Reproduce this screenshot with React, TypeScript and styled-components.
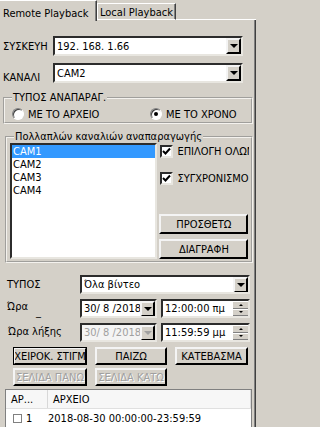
import styled, { createGlobalStyle } from "styled-components";

const GlobalStyle = createGlobalStyle`
  html, body {
    margin: 0;
    padding: 0;
    background: #d4d0c8;
  }
  body {
    width: 259px;
    height: 427px;
    overflow: hidden;
    font-family: "DejaVu Sans Condensed", "Liberation Sans", Tahoma, Arial, sans-serif;
    font-size: 11px;
    color: #000;
  }
`;

const cams = ["CAM1", "CAM2", "CAM3", "CAM4"];

const ComboBox = ({ value, width, disabled }: { value: string; width: number; disabled?: boolean }) => (
  <Combo $width={width} $disabled={disabled}>
    <ComboText>{value}</ComboText>
    <ArrowButton>
      <Triangle $disabled={disabled} />
    </ArrowButton>
  </Combo>
);

const TimeBox = ({ value }: { value: string }) => (
  <TimeField>
    <ComboText>{value}</ComboText>
    <Spinner>
      <SpinHalf>
        <SpinUp />
      </SpinHalf>
      <SpinHalf>
        <SpinDown />
      </SpinHalf>
    </Spinner>
  </TimeField>
);

const CheckBox = ({ checked }: { checked?: boolean }) => (
  <CheckSquare>
    {checked && (
      <svg width="9" height="9" viewBox="0 0 9 9">
        <path d="M1 4 L3.5 6.5 L8 1.5" stroke="#000" strokeWidth="2" fill="none" />
      </svg>
    )}
  </CheckSquare>
);

export default function App() {
  return (
    <>
      <GlobalStyle />
      <Window>
        <TabBar>
          <Tab $active>Remote Playback</Tab>
          <Tab>Local Playback</Tab>
          <TabFiller />
        </TabBar>
        <Panel>
          <FieldRow>
            <RowLabel>ΣΥΣΚΕΥΗ</RowLabel>
            <ComboBox value="192. 168. 1.66" width={190} />
          </FieldRow>
          <FieldRow>
            <RowLabel $drop={8}>ΚΑΝΑΛΙ</RowLabel>
            <ComboBox value="CAM2" width={190} />
          </FieldRow>

          <Group $inset={0} $width={250} $top={1}>
            <Legend>ΤΥΠΟΣ ΑΝΑΠΑΡΑΓ.</Legend>
            <RadioRow>
              <RadioOption>
                <Radio />
                ΜΕ ΤΟ ΑΡΧΕΙΟ
              </RadioOption>
              <RadioOption>
                <Radio $checked />
                ΜΕ ΤΟ ΧΡΟΝΟ
              </RadioOption>
            </RadioRow>
          </Group>

          <Group $inset={2} $width={248} $top={6}>
            <Legend>Πολλαπλών καναλιών αναπαραγωγής</Legend>
            <MultiBody>
              <ListBox>
                {cams.map((c, i) => (
                  <ListItem key={c} $selected={i === 0}>
                    {c}
                  </ListItem>
                ))}
              </ListBox>
              <SideColumn>
                <CheckOption>
                  <CheckBox checked />
                  ΕΠΙΛΟΓΗ ΟΛΩΝ
                </CheckOption>
                <CheckOption>
                  <CheckBox checked />
                  ΣΥΓΧΡΟΝΙΣΜΟΣ
                </CheckOption>
                <SideButtons>
                  <Button $width={89}>ΠΡΟΣΘΕΤΩ</Button>
                  <Button $width={89}>ΔΙΑΓΡΑΦΗ</Button>
                </SideButtons>
              </SideColumn>
            </MultiBody>
          </Group>

          <FormGrid>
            <FormLabel>ΤΥΠΟΣ</FormLabel>
            <ComboBox value="Όλα βίντεο" width={170} />
            <FormLabel $lift={2}>
              Ώρα <Stray>_</Stray>
            </FormLabel>
            <DateTime>
              <ComboBox value="30/ 8 /2018" width={77} />
              <TimeBox value="12:00:00 πμ" />
            </DateTime>
            <FormLabel $indent={1} $lift={1}>
              Ώρα λήξης
            </FormLabel>
            <DateTime>
              <ComboBox value="30/ 8 /2018" width={77} disabled />
              <TimeBox value="11:59:59 μμ" />
            </DateTime>
          </FormGrid>

          <ButtonRow $top={5}>
            <Button $width={74} $focused>
              <Clip>ΧΕΙΡΟΚ. ΣΤΙΓΜ</Clip>
            </Button>
            <Button $width={72}>ΠΑΙΖΩ</Button>
            <Button $width={73}>ΚΑΤΕΒΑΣΜΑ</Button>
          </ButtonRow>
          <ButtonRow $top={3}>
            <Button $width={74} $disabled>
              ΣΕΛΙΔΑ ΠΑΝΩ
            </Button>
            <Button $width={72} $disabled>
              ΣΕΛΙΔΑ ΚΑΤΩ
            </Button>
          </ButtonRow>

          <FileTable>
            <HeaderRow>
              <HeaderCell $width={42}>ΑΡ...</HeaderCell>
              <HeaderCell>ΑΡΧΕΙΟ</HeaderCell>
            </HeaderRow>
            <DataRow>
              <NumCell>
                <FileCheck />1
              </NumCell>
              <span>2018-08-30 00:00:00-23:59:59</span>
            </DataRow>
          </FileTable>
        </Panel>
      </Window>
    </>
  );
}

const Window = styled.div`
  width: 259px;
  height: 427px;
  display: flex;
  flex-direction: column;
  overflow: hidden;
  background: #d4d0c8;
`;

const TabBar = styled.div`
  display: flex;
  align-items: flex-end;
  height: 20px;
  width: 256px;
`;

const Tab = styled.div<{ $active?: boolean }>`
  box-sizing: border-box;
  height: ${(p) => (p.$active ? "21px" : "17px")};
  width: ${(p) => (p.$active ? "97px" : "79px")};
  padding-left: ${(p) => (p.$active ? "3px" : "2px")};
  margin-bottom: ${(p) => (p.$active ? "-1px" : "0")};
  display: flex;
  align-items: ${(p) => (p.$active ? "flex-start" : "center")};
  padding-top: ${(p) => (p.$active ? "6px" : "1px")};
  border-top: 1px solid #fff;
  border-left: ${(p) => (p.$active ? "none" : "1px solid #fff")};
  border-right: 1px solid #404040;
  border-bottom: ${(p) => (p.$active ? "none" : "1px solid #fff")};
  box-shadow: inset -1px 0 #808080;
  background: #d4d0c8;
  position: relative;
  z-index: ${(p) => (p.$active ? 1 : 0)};
  white-space: nowrap;
  overflow: hidden;
`;

const TabFiller = styled.div`
  flex: 1;
  height: 1px;
  background: #fff;
`;

const Panel = styled.div`
  box-sizing: border-box;
  width: 256px;
  flex: 1;
  padding: 16px 0 0 3px;
  border-right: 1px solid #404040;
  box-shadow: inset -1px 0 #808080;
  display: flex;
  flex-direction: column;
`;

const FieldRow = styled.div`
  display: flex;
  align-items: center;
  height: 20px;
  margin-bottom: 7px;
`;

const RowLabel = styled.div<{ $drop?: number }>`
  width: 50px;
  padding-top: ${(p) => p.$drop ?? 0}px;
  white-space: nowrap;
`;

const Combo = styled.div<{ $width: number; $disabled?: boolean }>`
  box-sizing: border-box;
  width: ${(p) => p.$width}px;
  height: 20px;
  border: 2px inset #e8e6e0;
  border-top-color: #808080;
  border-left-color: #808080;
  background: ${(p) => (p.$disabled ? "#f4f4f4" : "#fff")};
  color: ${(p) => (p.$disabled ? "#a0a0a0" : "#000")};
  display: flex;
  align-items: center;
  padding-left: 2px;
  overflow: hidden;
`;

const ComboText = styled.span`
  flex: 1;
  white-space: nowrap;
  overflow: hidden;
`;

const ArrowButton = styled.div`
  box-sizing: border-box;
  width: 15px;
  height: 16px;
  background: #d4d0c8;
  border: 2px outset #f4f4f4;
  border-right-color: #404040;
  border-bottom-color: #404040;
  display: flex;
  align-items: center;
  justify-content: center;
`;

const Triangle = styled.div<{ $disabled?: boolean }>`
  width: 0;
  height: 0;
  border-left: 4px solid transparent;
  border-right: 4px solid transparent;
  border-top: 4px solid ${(p) => (p.$disabled ? "#a0a0a0" : "#000")};
`;

const Group = styled.fieldset<{ $inset: number; $width: number; $top: number }>`
  box-sizing: border-box;
  margin: ${(p) => p.$top}px 0 0 ${(p) => p.$inset}px;
  width: ${(p) => p.$width}px;
  padding: 0 2px 2px 3px;
  border: 2px groove #f4f2ee;
  min-inline-size: 0;
`;

const Legend = styled.legend`
  margin-left: 4px;
  padding: 0 1px;
  line-height: 13px;
  white-space: nowrap;
`;

const RadioRow = styled.div`
  display: grid;
  grid-template-columns: 138px 1fr;
  align-items: center;
  height: 16px;
  padding: 2px 0 0 4px;
  margin-bottom: -2px;
`;

const RadioOption = styled.label`
  display: flex;
  align-items: center;
  gap: 4px;
  white-space: nowrap;
`;

const Radio = styled.span<{ $checked?: boolean }>`
  box-sizing: border-box;
  width: 12px;
  height: 12px;
  border-radius: 50%;
  background: #fff;
  border: 1px solid #808080;
  border-bottom-color: #fff;
  border-right-color: #fff;
  box-shadow: inset 1px 1px #404040;
  display: flex;
  align-items: center;
  justify-content: center;
  &::after {
    content: "";
    width: 4px;
    height: 4px;
    border-radius: 50%;
    background: ${(p) => (p.$checked ? "#000" : "transparent")};
  }
`;

const MultiBody = styled.div`
  display: flex;
  gap: 2px;
`;

const ListBox = styled.div`
  box-sizing: border-box;
  width: 148px;
  height: 116px;
  background: #fff;
  border: 2px inset #e8e6e0;
  border-top-color: #808080;
  border-left-color: #808080;
`;

const ListItem = styled.div<{ $selected?: boolean }>`
  height: 13px;
  line-height: 13px;
  padding-left: 1px;
  background: ${(p) => (p.$selected ? "#3399ff" : "transparent")};
  color: ${(p) => (p.$selected ? "#fff" : "#000")};
`;

const SideColumn = styled.div`
  width: 90px;
  height: 116px;
  display: flex;
  flex-direction: column;
  overflow: hidden;
`;

const CheckOption = styled.label`
  display: flex;
  align-items: center;
  gap: 4px;
  height: 15px;
  white-space: nowrap;
  margin-top: 1px;
  margin-bottom: 11px;
  padding-left: 1px;
`;

const CheckSquare = styled.span`
  box-sizing: border-box;
  flex: none;
  width: 13px;
  height: 13px;
  background: #fff;
  border: 2px inset #e8e6e0;
  border-top-color: #808080;
  border-left-color: #808080;
  display: flex;
  align-items: center;
  justify-content: center;
`;

const SideButtons = styled.div`
  display: flex;
  flex-direction: column;
  gap: 5px;
  margin-top: auto;
`;

const Button = styled.div<{ $width: number; $disabled?: boolean; $focused?: boolean }>`
  box-sizing: border-box;
  width: ${(p) => p.$width}px;
  height: 20px;
  background: #d4d0c8;
  border: 2px outset #f4f4f4;
  border-right-color: #404040;
  border-bottom-color: #404040;
  outline: ${(p) => (p.$focused ? "1px solid #000" : "none")};
  outline-offset: -1px;
  color: ${(p) => (p.$disabled ? "#a0a0a0" : "#000")};
  text-shadow: ${(p) => (p.$disabled ? "1px 1px #fff" : "none")};
  display: flex;
  align-items: center;
  justify-content: center;
  white-space: nowrap;
  overflow: hidden;
`;

const Clip = styled.span`
  flex: none;
`;

const FormGrid = styled.div`
  display: grid;
  grid-template-columns: 77px 170px;
  grid-template-rows: 19px 19px 19px;
  row-gap: 5px;
  align-items: center;
  margin-top: 12px;
  & > div:nth-child(even) {
    height: 19px;
  }
`;

const FormLabel = styled.div<{ $indent?: number; $lift?: number }>`
  padding-left: ${(p) => 4 + (p.$indent ?? 0)}px;
  margin-top: ${(p) => -2 * (p.$lift ?? 0)}px;
  white-space: nowrap;
  position: relative;
`;

const Stray = styled.span`
  position: absolute;
  left: 33px;
  top: 5px;
`;

const DateTime = styled.div`
  display: flex;
  gap: 4px;
  & > div {
    height: 19px;
  }
`;

const TimeField = styled.div`
  box-sizing: border-box;
  width: 89px;
  height: 19px;
  border: 2px inset #e8e6e0;
  border-top-color: #808080;
  border-left-color: #808080;
  background: #fff;
  display: flex;
  align-items: center;
  padding-left: 2px;
`;

const Spinner = styled.div`
  width: 15px;
  height: 15px;
  display: flex;
  flex-direction: column;
`;

const SpinHalf = styled.div`
  flex: 1;
  background: #d4d0c8;
  border-top: 1px solid #fff;
  border-bottom: 1px solid #808080;
  display: flex;
  align-items: center;
  justify-content: center;
`;

const SpinUp = styled.div`
  width: 0;
  height: 0;
  border-left: 2px solid transparent;
  border-right: 2px solid transparent;
  border-bottom: 2px solid #000;
`;

const SpinDown = styled(SpinUp)`
  border-bottom: none;
  border-top: 2px solid #000;
`;

const ButtonRow = styled.div<{ $top: number }>`
  display: flex;
  gap: 8px;
  margin: ${(p) => p.$top}px 0 0 10px;
  height: 18px;
  & > div {
    height: 18px;
  }
`;

const FileTable = styled.div`
  box-sizing: border-box;
  margin: 3px 0 0 2px;
  width: 247px;
  flex: 1;
  background: #fff;
  border: 1px solid #808080;
  border-bottom: none;
`;

const HeaderRow = styled.div`
  display: flex;
  height: 18px;
  background: #f7f7f7;
  border-bottom: 1px solid #e0e0e0;
`;

const HeaderCell = styled.div<{ $width?: number }>`
  box-sizing: border-box;
  width: ${(p) => (p.$width ? `${p.$width}px` : "auto")};
  flex: ${(p) => (p.$width ? "none" : 1)};
  padding-left: 5px;
  display: flex;
  align-items: center;
  border-right: 1px solid #d8d8d8;
  white-space: nowrap;
  overflow: hidden;
`;

const DataRow = styled.div`
  display: flex;
  align-items: center;
  height: 18px;
`;

const NumCell = styled.div`
  width: 42px;
  padding-left: 7px;
  box-sizing: border-box;
  display: flex;
  align-items: center;
  gap: 4px;
`;

const FileCheck = styled.span`
  box-sizing: border-box;
  width: 9px;
  height: 9px;
  border: 1px solid #808080;
  background: #fff;
`;
